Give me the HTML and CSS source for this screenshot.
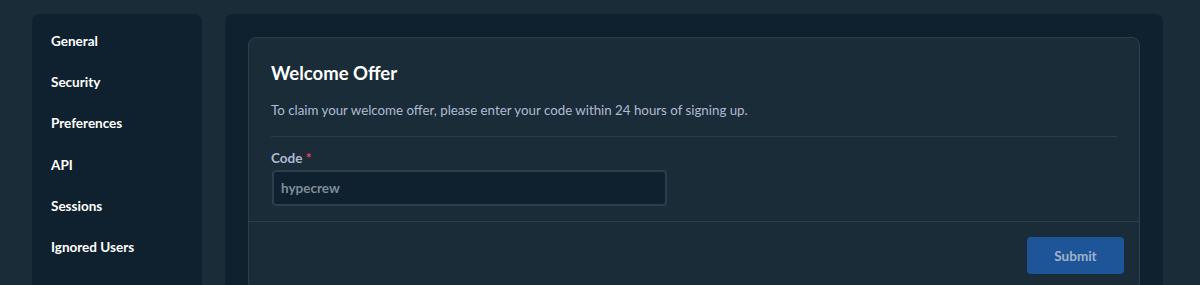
FILE: index.html
```html
<!DOCTYPE html>
<html lang="en">
<head>
<meta charset="utf-8">
<title>Settings - Offers</title>
<link rel="stylesheet" href="styles.css">
</head>
<body>
<div class="layout">
  <nav class="sidebar">
    <a class="nav-item">General</a>
    <a class="nav-item">Security</a>
    <a class="nav-item">Preferences</a>
    <a class="nav-item">API</a>
    <a class="nav-item">Sessions</a>
    <a class="nav-item">Ignored Users</a>
  </nav>
  <main class="panel">
    <section class="card">
      <div class="card-body">
        <h2 class="card-title">Welcome Offer</h2>
        <p class="card-desc">To claim your welcome offer, please enter your code within 24 hours of signing up.</p>
        <div class="field">
          <label class="field-label">Code <span class="req">*</span></label>
          <div class="input">hypecrew</div>
        </div>
      </div>
      <div class="card-footer">
        <button class="btn">Submit</button>
      </div>
    </section>
  </main>
</div>
</body>
</html>
```
FILE: styles.css
```css
* { box-sizing: border-box; }
html, body { margin: 0; height: 100%; }
body {
  background: #1a2c38;
  font-family: Lato, "Noto Sans", sans-serif;
  overflow: hidden;
}
.layout {
  display: grid;
  grid-template-columns: 170px 938px;
  gap: 23px;
  padding: 14px 0 0 32px;
  height: 320px;
}
.sidebar {
  background: #0f212e;
  border-radius: 8px;
  padding: 6px 0;
  display: flex;
  flex-direction: column;
}
.nav-item {
  height: 41.33px;
  display: flex;
  align-items: center;
  padding-left: 19px;
  color: #ffffff;
  font-size: 13.5px;
  font-weight: 700;
}
.panel {
  background: #0f212e;
  border-radius: 8px;
  padding: 23px;
}
.card {
  background: #1a2c38;
  border: 1px solid #2b3e4c;
  border-radius: 8px;
}
.card-body {
  padding: 22px 22px 15px;
}
.card-title {
  margin: 0;
  font-size: 18.5px;
  line-height: 26px;
  font-weight: 700;
  color: #ffffff;
}
.card-desc {
  margin: 14px 0 0;
  font-size: 13.3px;
  line-height: 20px;
  color: #b1bad3;
  padding-bottom: 16px;
  border-bottom: 1px solid #2b3e4c;
}
.field {
  margin-top: 12px;
  display: flex;
  flex-direction: column;
}
.field-label {
  font-size: 13.5px;
  font-weight: 700;
  line-height: 18px;
  color: #b1bad3;
  margin-bottom: 3px;
}
.req { color: #ed4163; }
.input {
  width: 395px;
  height: 36px;
  margin-left: 1px;
  background: #0f212e;
  border: 2px solid #2b3e4c;
  border-radius: 4px;
  display: flex;
  align-items: center;
  padding-left: 7px;
  font-size: 13.5px;
  font-weight: 700;
  color: #808c98;
}
.card-footer {
  border-top: 1px solid #2b3e4c;
  padding: 15px 15px 16px;
  display: flex;
  justify-content: flex-end;
}
.btn {
  width: 97px;
  height: 37px;
  border: 0;
  border-radius: 4px;
  background: #1d5598;
  color: #9fb3ca;
  font-family: inherit;
  font-size: 13.5px;
  font-weight: 700;
}
```
